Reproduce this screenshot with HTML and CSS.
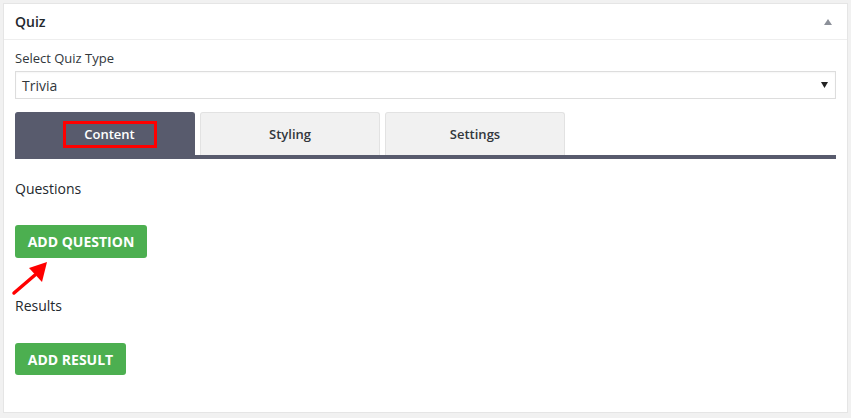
FILE: index.html
```html
<!DOCTYPE html>
<html>
<head>
<meta charset="utf-8">
<link rel="stylesheet" href="styles.css">
</head>
<body>
<div class="panel">
  <div class="panel-head">
    <span class="panel-title">Quiz</span>
    <svg class="toggle" width="8" height="6" viewBox="0 0 8 6"><polygon points="4,0 8,6 0,6" fill="#8c9099"/></svg>
  </div>
  <div class="panel-body">
    <div class="label">Select Quiz Type</div>
    <div class="select">
      <span>Trivia</span>
      <svg width="7" height="6" viewBox="0 0 7 6"><polygon points="0,0 7,0 3.5,6" fill="#222"/></svg>
    </div>
    <div class="tabs">
      <div class="tab active"><span class="mark">Content</span></div>
      <div class="tab">Styling</div>
      <div class="tab">Settings</div>
    </div>
    <div class="section-title q">Questions</div>
    <div class="btn-wrap">
      <button class="btn btn-q">ADD QUESTION</button>
      <svg class="arrow" width="50" height="40" viewBox="0 0 50 40"><line x1="3" y1="34" x2="24" y2="16" stroke="#ff0000" stroke-width="3.5" stroke-linecap="round"/><polygon points="36,3 18,9 31,23" fill="#ff0000"/></svg>
    </div>
    <div class="section-title r">Results</div>
    <button class="btn btn-r">ADD RESULT</button>
  </div>
</div>
</body>
</html>
```
FILE: styles.css
```css
* { box-sizing: border-box; }
html, body { margin: 0; }
body {
  background: #f1f1f1;
  padding: 3px;
  font-family: "Open Sans", "Noto Sans", sans-serif;
  color: #23282d;
}
.panel {
  width: 845px;
  height: 410px;
  background: #fff;
  border: 1px solid #e5e5e5;
}
.panel-head {
  height: 36px;
  border-bottom: 1px solid #eeeeee;
  display: flex;
  align-items: center;
  justify-content: space-between;
  padding: 0 15px 0 11px;
}
.panel-title { font-size: 14px; font-weight: 600; }
.toggle { margin-top: 1px; }
.panel-body { padding: 0 11px; }
.label {
  font-size: 13px;
  margin-top: 10px;
  height: 17px;
  line-height: 17px;
  color: #32373c;
}
.select {
  margin-top: 4px;
  height: 28px;
  border: 1px solid #dddddd;
  display: flex;
  align-items: center;
  justify-content: space-between;
  padding: 0 7px 0 6px;
  font-size: 14px;
  color: #32373c;
  box-shadow: inset 0 1px 2px rgba(0,0,0,0.04);
}
.tabs {
  margin-top: 13px;
  display: flex;
  gap: 5px;
  border-bottom: 4px solid #585b6d;
}
.tab {
  width: 180px;
  height: 43px;
  display: flex;
  align-items: center;
  justify-content: center;
  background: #f1f1f1;
  border: 1px solid #e2e2e2;
  border-bottom: none;
  border-radius: 3px 3px 0 0;
  font-size: 13px;
  font-weight: 600;
  color: #32373c;
}
.tab.active {
  background: #585b6d;
  border-color: #585b6d;
  color: #fff;
}
.mark {
  display: inline-block;
  width: 94px;
  height: 27px;
  line-height: 21px;
  text-align: center;
  border: 3px solid #ff0000;
  margin-left: 9px;
}
.section-title { font-size: 14px; line-height: 20px; color: #23282d; }
.section-title.q { margin-top: 20px; }
.section-title.r { margin-top: 38px; }
.btn-wrap { position: relative; }
.btn {
  display: block;
  border: none;
  border-radius: 3px;
  background: #4caf50;
  color: #fff;
  font-family: "Open Sans", "Noto Sans", sans-serif;
  font-size: 14px;
  font-weight: 700;
  padding: 0;
  text-align: center;
}
.btn-q { margin-top: 26px; width: 132px; height: 33px; }
.btn-r { margin-top: 27px; width: 111px; height: 32px; }
.arrow {
  position: absolute;
  left: -4px;
  top: 34px;
}
```
